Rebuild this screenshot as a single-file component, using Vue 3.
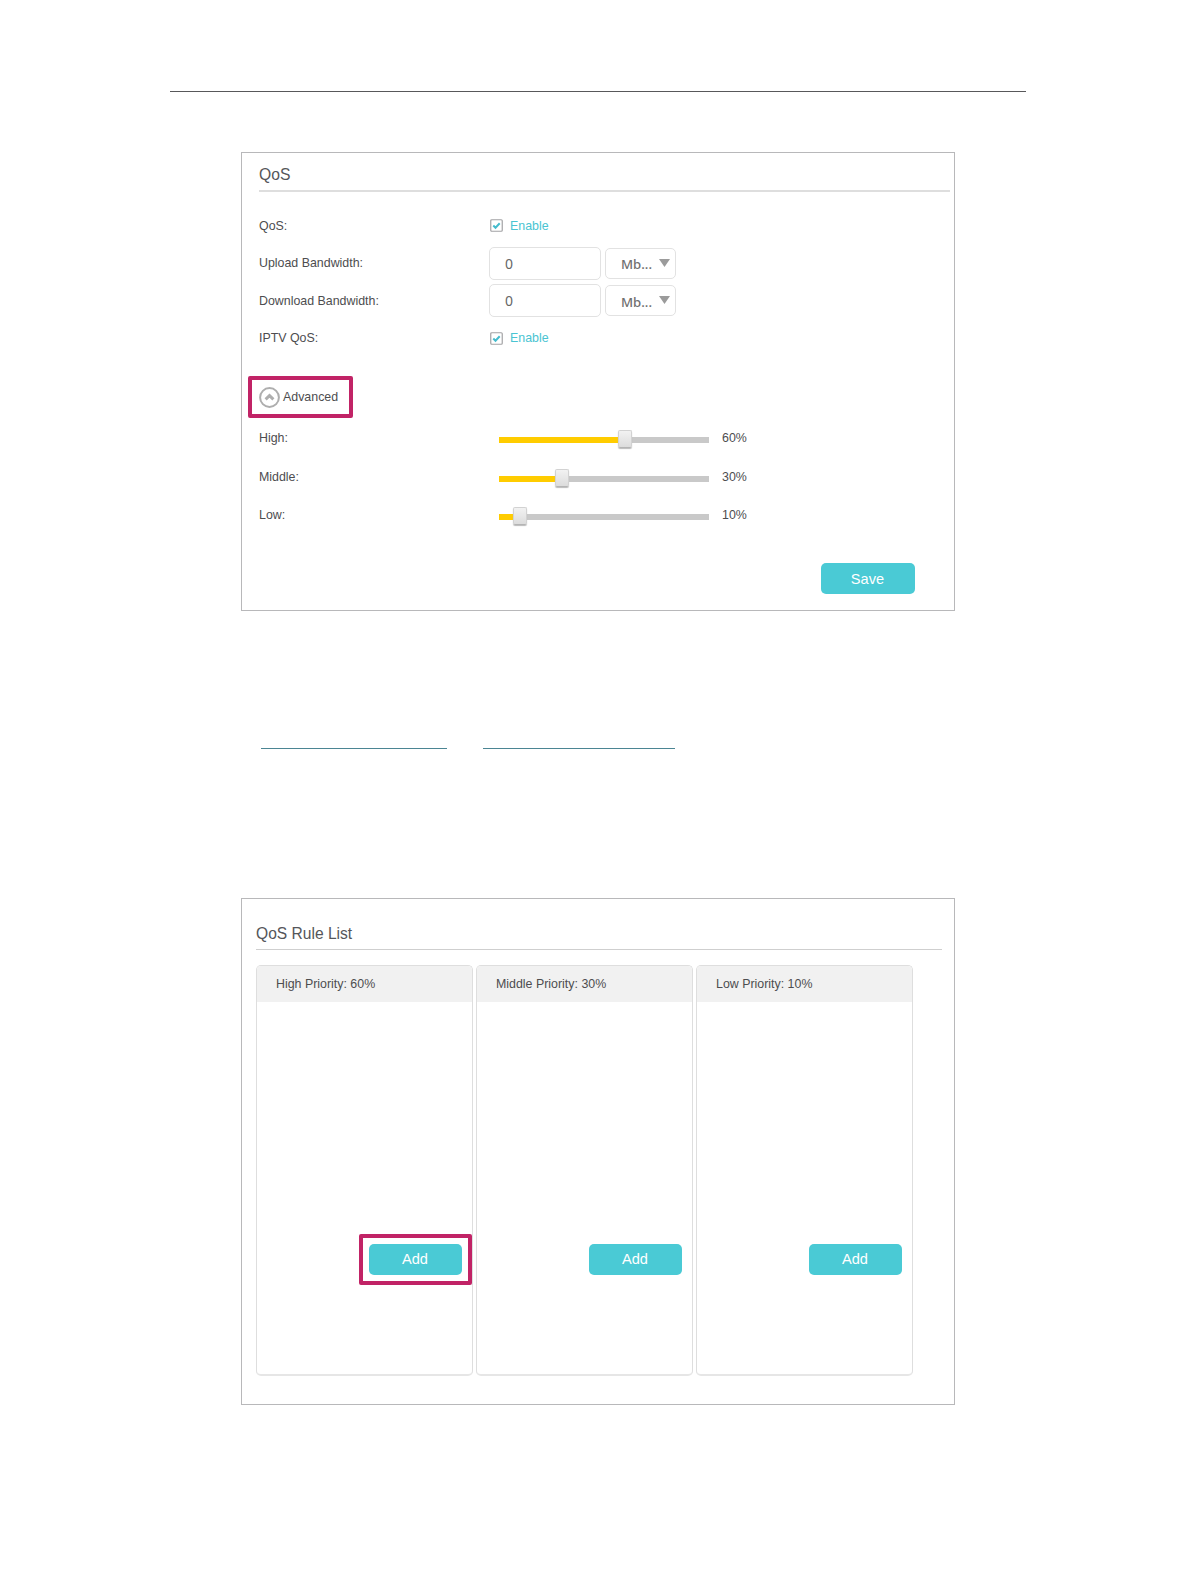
<template>
  <div class="page">
    <hr class="page-rule" />

    <section class="panel qos">
      <h2 class="qos-title">QoS</h2>

      <div class="row">
        <span class="label">QoS:</span>
        <button class="check" @click="enabled = !enabled">
          <svg class="box" viewBox="0 0 13 13">
            <rect x="0.75" y="0.75" width="11.5" height="11.5" rx="1" />
            <path v-if="enabled" d="M3.3 6.5 5.5 8.7 9.7 4.3" />
          </svg>
          Enable
        </button>
      </div>

      <div v-for="band in bandwidths" :key="band.label" class="row">
        <span class="label">{{ band.label }}</span>
        <input v-model="band.value" class="amount" type="text" />
        <div class="unit">
          <span>Mb...</span>
          <svg class="arrow" viewBox="0 0 11 8"><path d="M0 0h11L5.5 8z" /></svg>
        </div>
      </div>

      <div class="row">
        <span class="label">IPTV QoS:</span>
        <button class="check" @click="iptv = !iptv">
          <svg class="box" viewBox="0 0 13 13">
            <rect x="0.75" y="0.75" width="11.5" height="11.5" rx="1" />
            <path v-if="iptv" d="M3.3 6.5 5.5 8.7 9.7 4.3" />
          </svg>
          Enable
        </button>
      </div>

      <div class="advanced highlight">
        <svg class="toggle" viewBox="0 0 21 21">
          <circle cx="10.5" cy="10.5" r="9.4" />
          <path d="M6.6 12.4 10.5 8.6l3.9 3.8" />
        </svg>
        <span>Advanced</span>
      </div>

      <div v-for="level in levels" :key="level.name" class="row slider-row">
        <span class="label">{{ level.name }}:</span>
        <div class="slider">
          <div class="fill" :style="{ width: level.share + '%' }"></div>
          <div class="thumb"></div>
        </div>
        <span class="share">{{ level.share }}%</span>
      </div>

      <button class="btn save">Save</button>
    </section>

    <div class="links">
      <span class="link first"></span>
      <span class="link second"></span>
    </div>

    <section class="panel rules">
      <h2 class="rules-title">QoS Rule List</h2>
      <div class="cards">
        <div v-for="(level, index) in levels" :key="level.name" class="card">
          <div class="card-head">{{ level.name }} Priority: {{ level.share }}%</div>
          <div class="card-body">
            <div class="add-wrap" :class="{ highlight: index === 0 }">
              <button class="btn">Add</button>
            </div>
          </div>
        </div>
      </div>
    </section>
  </div>
</template>

<script setup>
import { ref } from "vue";

const enabled = ref(true);
const iptv = ref(true);

const bandwidths = ref([
  { label: "Upload Bandwidth:", value: "0" },
  { label: "Download Bandwidth:", value: "0" },
]);

const levels = ref([
  { name: "High", share: 60 },
  { name: "Middle", share: 30 },
  { name: "Low", share: 10 },
]);
</script>

<style>
body {
  margin: 0;
  background: #fff;
}
</style>

<style scoped>
.page {
  box-sizing: border-box;
  width: 1196px;
  height: 1582px;
  padding: 91px 170px 0;
  font-family: "Liberation Sans", Arial, sans-serif;
  font-size: 12.4px;
  color: #4d4d4f;
}

.page * {
  box-sizing: border-box;
}

.page-rule {
  height: 1px;
  margin: 0 0 60px;
  border: none;
  background: #58585a;
}

.panel {
  width: 714px;
  margin-left: 71px;
  border: 1px solid #b8b8ba;
}

h2 {
  margin: 0;
  font-weight: normal;
  line-height: 20px;
}

button {
  padding: 0;
  border: none;
  font-family: inherit;
  cursor: pointer;
}

.qos {
  height: 459px;
  padding: 12px 4px 0 17px;
}

.qos-title {
  height: 27px;
  margin-bottom: 15px;
  border-bottom: 2px solid #dedede;
  font-size: 15.7px;
  color: #55565a;
}

.row {
  display: flex;
  align-items: center;
  height: 37.5px;
}

.label {
  width: 230px;
}

.check {
  display: flex;
  align-items: center;
  gap: 7.5px;
  padding-left: 0.5px;
  background: none;
  font-size: 12.4px;
  color: #4ac4d2;
}

.box {
  width: 13px;
  height: 13px;
  fill: #fff;
  stroke: #a3a3a5;
  stroke-width: 1.2;
}

.box path {
  fill: none;
  stroke: #45bccd;
  stroke-width: 2;
}

.amount {
  width: 112px;
  height: 33px;
  padding: 0 0 0 15px;
  border: 1px solid #e2e2e2;
  border-radius: 5px;
  outline: none;
  font-family: "Noto Sans", sans-serif;
  font-size: 14px;
  color: #666;
}

.unit {
  display: flex;
  align-items: center;
  justify-content: space-between;
  width: 71px;
  height: 31px;
  margin-left: 4px;
  padding: 2px 5px 0 15px;
  border: 1px solid #e2e2e2;
  border-radius: 5px;
  font-family: "Noto Sans", sans-serif;
  font-size: 13.2px;
  font-weight: 500;
  color: #707070;
}

.arrow {
  width: 11px;
  height: 8px;
  margin-bottom: 3px;
  fill: #9b9b9b;
}

.highlight {
  border: 4px solid #c12366;
  border-radius: 2px;
}

.advanced {
  display: flex;
  align-items: center;
  gap: 3.5px;
  width: 105px;
  height: 42px;
  margin: 19px 0 1px -11px;
  padding-left: 6.5px;
}

.toggle {
  width: 21px;
  height: 21px;
  fill: none;
  stroke: #aeaeae;
  stroke-width: 2;
}

.toggle path {
  stroke-width: 3;
}

.slider-row {
  height: 38.5px;
}

.slider {
  display: flex;
  align-items: center;
  width: 210px;
  height: 6px;
  margin: 4px 13px 0 10px;
  background: #c9c9c9;
}

.fill {
  flex: none;
  height: 6px;
  background: #fc0;
}

.thumb {
  flex: none;
  width: 14px;
  height: 18px;
  margin: -2px 0 0 -7.5px;
  border: 1px solid #d2d2d2;
  border-bottom-color: #b4b4b4;
  border-radius: 2px;
  background: linear-gradient(#f2f2f2, #dcdcdc);
  box-shadow: 0 1px 1px #bbb;
}

.btn {
  display: block;
  width: 93px;
  height: 31px;
  border-radius: 5px;
  background: #4acad5;
  font-size: 14.6px;
  line-height: 31px;
  color: #fff;
}

.save {
  width: 94px;
  margin: 28px 0 0 561.5px;
  padding-top: 1px;
}

.links {
  display: flex;
  height: 150px;
  margin: 137px 0 0 91px;
}

.link {
  height: 1px;
  background: #4b8593;
}

.first {
  width: 186px;
  margin-right: 36px;
}

.second {
  width: 192px;
}

.rules {
  height: 507px;
  padding: 25px 12px 0 14px;
}

.rules-title {
  height: 26px;
  margin-bottom: 15px;
  border-bottom: 1px solid #cfcfcf;
  font-size: 15.6px;
  color: #55565a;
}

.cards {
  display: flex;
  gap: 3px;
}

.card {
  width: 217px;
  height: 411px;
  border: 1.5px solid #dedede;
  border-bottom: 2px solid #e6e6e6;
  border-radius: 5px;
  overflow: hidden;
}

.card-head {
  height: 36px;
  padding-left: 19px;
  background: #f1f1f1;
  line-height: 37px;
}

.card-body {
  display: flex;
  justify-content: flex-end;
  padding: 232px 0.5px 0 0;
}

.add-wrap {
  width: 113px;
  height: 51px;
  padding: 10px;
}

.add-wrap.highlight {
  padding: 6px;
}
</style>
